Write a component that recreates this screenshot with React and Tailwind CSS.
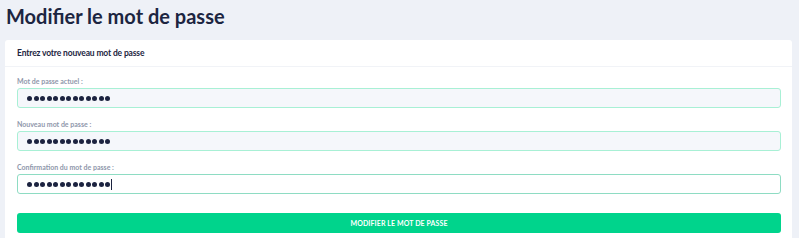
import React from 'react'

const font = { fontFamily: 'Lato, "Open Sans", sans-serif' }

function Dots({ caret }) {
    return (
        <div className="flex items-center gap-[1.5px]">
            {Array.from({ length: 13 }).map((_, i) => (
                <span key={i} className="block w-[5px] h-[5px] rounded-full bg-[#1c2340]" />
            ))}
            {caret && <span className="block w-px h-[11px] bg-[#1c2340] ml-[-1px]" />}
        </div>
    )
}

function Field({ label, focused, caret }) {
    return (
        <div>
            <label className="block text-[7px] font-bold text-[#8f97ab] mb-[2px] leading-[9px]">{label}</label>
            <div
                className={
                    focused
                        ? 'h-[20px] rounded-[3px] border border-[#8edcc3] bg-white flex items-center pl-[9px]'
                        : 'h-[20px] rounded-[3px] border border-[#a8f0d5] bg-[#f5f7fb] flex items-center pl-[9px]'
                }
            >
                <Dots caret={caret} />
            </div>
        </div>
    )
}

export default function App() {
    return (
        <div className="min-h-[238px] bg-[#eef1f7] px-[5px] pt-[4px]" style={font}>
            <h1 className="text-[20px] font-bold text-[#1c2541] leading-[24px] pl-px">Modifier le mot de passe</h1>

            <div className="mt-[12px] mr-[2px] bg-white rounded-[3px]">
                {/* Header */}
                <div className="h-[27px] border-b border-[#f1f3f7] flex items-center px-[12px]">
                    <span className="text-[8.5px] font-bold tracking-[-0.15px] text-[#1c2541]">Entrez votre nouveau mot de passe</span>
                </div>

                {/* Body */}
                <div className="px-[12px] pr-[11px] pt-[10px] pb-[10px] flex flex-col gap-[12px]">
                    <Field label="Mot de passe actuel :" />
                    <Field label="Nouveau mot de passe :" />
                    <Field label="Confirmation du mot de passe :" focused caret />
                    <button className="mt-[7px] h-[20px] w-full rounded-[3px] bg-[#00d48c] text-white text-[7px] font-bold uppercase tracking-[0.1px]">
                        Modifier le mot de passe
                    </button>
                </div>
            </div>
        </div>
    )
}
